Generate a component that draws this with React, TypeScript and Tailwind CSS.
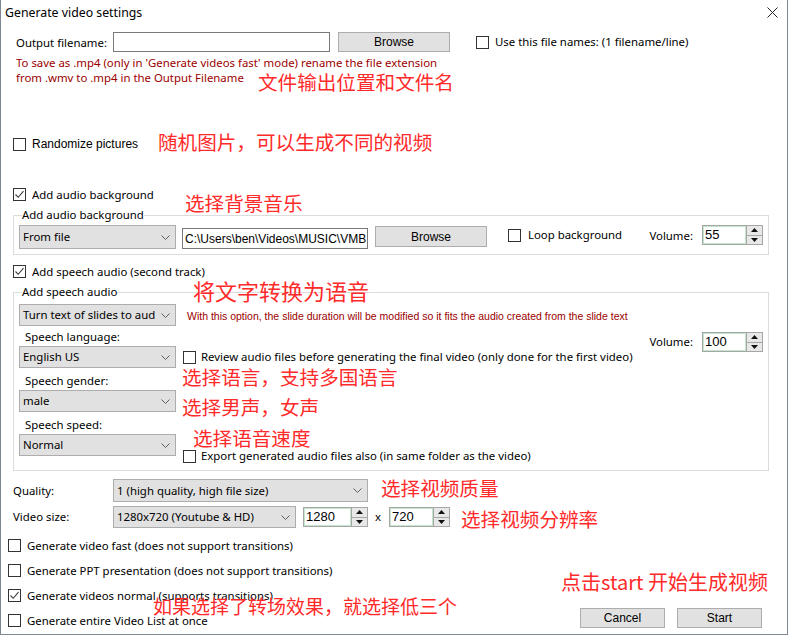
import type { ReactNode } from "react";

const ann = "font-['Noto_Sans_CJK_SC',sans-serif] text-[#ff2a2a] whitespace-nowrap";
const ms = "font-['Liberation_Sans',Arial,sans-serif]";

function Box({ checked = false }: { checked?: boolean }) {
  return (
    <span className="flex h-[13px] w-[13px] shrink-0 items-center justify-center border border-[#333333] bg-white">
      {checked ? (
        <svg width="11" height="11" viewBox="0 0 11 11">
          <path d="M1.5 5.5 L4.2 8.3 L9.5 2.2" fill="none" stroke="#3a3a3a" strokeWidth="1.1" />
        </svg>
      ) : null}
    </span>
  );
}

function Combo({ children, className }: { children: ReactNode; className: string }) {
  return (
    <div className={`flex shrink-0 items-center justify-between border border-[#adadad] bg-[#e1e1e1] pl-[3px] pr-[5px] ${className}`}>
      <span className="whitespace-nowrap">{children}</span>
      <svg width="9" height="5" viewBox="0 0 9 5" className="ml-[4px] shrink-0">
        <path d="M0.5 0.5 L4.5 4.5 L8.5 0.5" fill="none" stroke="#5f5f5f" />
      </svg>
    </div>
  );
}

function Spin({ value, className }: { value: string; className: string }) {
  return (
    <div className={`flex h-[20px] shrink-0 border border-[#a6a6a6] ${className}`}>
      <div className={`flex flex-1 items-center border border-[#c4e6cb] pl-[1px] text-[13px] ${ms}`}>{value}</div>
      <div className="flex w-[16px] flex-col border-l border-[#a6a6a6] bg-[#e8e8e8]">
        <div className="flex flex-1 items-center justify-center border-b border-[#a6a6a6]">
          <svg width="7" height="4" viewBox="0 0 7 4">
            <path d="M3.5 0 L7 4 L0 4 Z" fill="#111" />
          </svg>
        </div>
        <div className="flex flex-1 items-center justify-center">
          <svg width="7" height="4" viewBox="0 0 7 4">
            <path d="M0 0 L7 0 L3.5 4 Z" fill="#111" />
          </svg>
        </div>
      </div>
    </div>
  );
}

function Button({ children, className }: { children: ReactNode; className: string }) {
  return (
    <button className={`flex h-[20px] shrink-0 items-center justify-center border border-[#adadad] bg-[#e1e1e1] text-[12px] ${ms} ${className}`}>
      {children}
    </button>
  );
}

function CheckRow({ checked = false, children }: { checked?: boolean; children: ReactNode }) {
  return (
    <div className="flex h-[13px] items-center">
      <Box checked={checked} />
      <span className="ml-[6px] whitespace-nowrap">{children}</span>
    </div>
  );
}

export default function App() {
  return (
    <div className="h-[636px] w-[788px] bg-white font-['Noto_Sans',sans-serif] text-[11.4px] leading-[14px] text-black">
      <div className="relative flex h-[635px] w-[788px] flex-col border-x border-b border-[#7d8894]">
        {/* title bar */}
        <div className="flex h-[25px] shrink-0 items-center justify-between pl-[4px] pr-[9px]">
          <span className="text-[12.3px]">Generate video settings</span>
          <svg width="11" height="11" viewBox="0 0 11 11">
            <path d="M0.5 0.5 L10.5 10.5 M10.5 0.5 L0.5 10.5" stroke="#222" strokeWidth="1" />
          </svg>
        </div>

        {/* output filename */}
        <div className="mt-[7px] flex h-[20px] items-center pl-[15px]">
          <span className="w-[97px] shrink-0 pt-[1px]">Output filename:</span>
          <div className="h-[20px] w-[217px] shrink-0 border border-[#7a7a7a] bg-white" />
          <Button className="ml-[8px] w-[112px]">Browse</Button>
          <span className="ml-[26px]">
            <Box />
          </span>
          <span className="ml-[6px] whitespace-nowrap">Use this file names: (1 filename/line)</span>
        </div>

        <div className="mt-[3px] flex flex-col pl-[15px] leading-[15px] text-[#9b0000]">
          <span>To save as .mp4 (only in 'Generate videos fast' mode) rename the file extension</span>
          <div className="flex items-start">
            <span className="w-[242px] shrink-0">from .wmv to .mp4 in the Output Filename</span>
            <span className={`${ann} text-[19.6px] leading-[24px]`}>文件输出位置和文件名</span>
          </div>
        </div>

        {/* randomize */}
        <div className="mt-[38px] flex h-[24px] items-center pl-[12px]">
          <Box />
          <span className={`ml-[6px] w-[126px] shrink-0 text-[12px] ${ms}`}>Randomize pictures</span>
          <span className={`${ann} -mt-[4px] text-[19.6px] leading-[24px]`}>随机图片，可以生成不同的视频</span>
        </div>

        {/* audio background */}
        <div className="mt-[32px] pl-[12px]">
          <CheckRow checked>Add audio background</CheckRow>
        </div>

        <fieldset className="mt-[7px] ml-[12px] w-[756px] border border-[#dcdcdc] px-0 pb-[5px]">
          <legend className="ml-[8px] px-0 leading-[14px]">Add audio background</legend>
          <div className="mt-[3px] flex items-start pl-[5px] pr-[5px]">
            <Combo className="h-[24px] w-[157px]">From file</Combo>
            <div className={`mt-[3px] ml-[6px] flex h-[21px] w-[186px] shrink-0 items-center whitespace-nowrap border border-[#7a7a7a] pl-[2px] text-[12px] ${ms}`}>
              C:\Users\ben\Videos\MUSIC\VMB
            </div>
            <Button className="mt-[1px] ml-[7px] h-[21px] w-[112px]">Browse</Button>
            <span className="mt-[4px] ml-[21px]">
              <Box />
            </span>
            <span className="mt-[3px] ml-[7px] whitespace-nowrap">Loop background</span>
            <div className="ml-auto flex items-center">
              <span className="mt-[1px]">Volume:</span>
              <Spin value="55" className="ml-[9px] w-[61px]" />
            </div>
          </div>
        </fieldset>

        {/* speech audio */}
        <div className="mt-[10px] pl-[12px]">
          <CheckRow checked>Add speech audio (second track)</CheckRow>
        </div>

        <fieldset className="mt-[7px] ml-[12px] w-[756px] border border-[#dcdcdc] px-0">
          <legend className="ml-[8px] px-0 leading-[14px]">Add speech audio</legend>
          <div className="flex items-start">
            <div className="flex w-[162px] shrink-0 flex-col pb-[14px] pl-[5px]">
              <Combo className="mt-[5px] h-[22px] w-[157px]">Turn text of slides to aud</Combo>
              <span className="mt-[4px] pl-[6px]">Speech language:</span>
              <Combo className="mt-[2px] h-[22px] w-[157px]">English US</Combo>
              <span className="mt-[6px] pl-[6px]">Speech gender:</span>
              <Combo className="mt-[2px] h-[22px] w-[157px]">male</Combo>
              <span className="mt-[6px] pl-[6px]">Speech speed:</span>
              <Combo className="mt-[2px] h-[22px] w-[157px]">Normal</Combo>
            </div>
            <div className="ml-[6px] flex flex-1 flex-col pr-[5px]">
              <span className="mt-[10px] whitespace-nowrap pl-[5px] font-['Liberation_Sans_Narrow','Liberation_Sans',sans-serif] text-[10.5px] text-[#9b0000]">
                With this option, the slide duration will be modified so it fits the audio created from the slide text
              </span>
              <div className="mt-[9px] flex h-[20px] items-center justify-end">
                <span>Volume:</span>
                <Spin value="100" className="ml-[9px] w-[61px]" />
              </div>
              <div className="-mt-[2px] flex h-[14px] items-center pl-[1px]">
                <Box />
                <span className="ml-[5px] whitespace-nowrap">
                  Review audio files before generating the final video (only done for the first video)
                </span>
              </div>
              <span className={`${ann} mt-[1px] text-[19.6px] leading-[24px]`}>选择语言，支持多国语言</span>
              <span className={`${ann} mt-[6px] text-[19.6px] leading-[24px]`}>选择男声，女声</span>
              <span className={`${ann} mt-[7px] ml-[11px] text-[19.6px] leading-[24px]`}>选择语音速度</span>
              <div className="-mt-[1px] flex h-[14px] items-center pl-[1px]">
                <Box />
                <span className="ml-[5px] whitespace-nowrap">
                  Export generated audio files also (in same folder as the video)
                </span>
              </div>
            </div>
          </div>
        </fieldset>

        {/* quality */}
        <div className="mt-[8px] flex items-center pl-[12px]">
          <span className="w-[100px] shrink-0">Quality:</span>
          <Combo className="h-[23px] w-[255px]">1 (high quality, high file size)</Combo>
          <span className={`${ann} ml-[13px] -mt-[6px] text-[19.6px] leading-[24px]`}>选择视频质量</span>
        </div>

        <div className="mt-[4px] flex h-[22px] items-center pl-[12px]">
          <span className="w-[100px] shrink-0">Video size:</span>
          <Combo className="h-[22px] w-[183px]">1280x720 (Youtube &amp; HD)</Combo>
          <Spin value="1280" className="ml-[7px] w-[65px]" />
          <span className="ml-[7px]">x</span>
          <Spin value="720" className="ml-[8px] w-[61px]" />
          <span className={`${ann} ml-[11px] mt-[4px] text-[19.6px] leading-[24px]`}>选择视频分辨率</span>
        </div>

        {/* generate options + buttons */}
        <div className="mt-[11px] flex items-start">
          <div className="flex flex-col gap-[12px] pl-[7px]">
            <CheckRow>Generate video fast (does not support transitions)</CheckRow>
            <CheckRow>Generate PPT presentation (does not support transitions)</CheckRow>
            <CheckRow checked>Generate videos normal (supports transitions)</CheckRow>
            <CheckRow>Generate entire Video List at once</CheckRow>
          </div>
          <div className="mr-[25px] ml-auto flex flex-col items-end">
            <span className={`${ann} mt-[31px] -mr-[6px] text-[20px] leading-[24px]`}>点击start 开始生成视频</span>
            <div className="mt-[14px] flex">
              <Button className="w-[85px]">Cancel</Button>
              <Button className="ml-[12px] w-[85px]">Start</Button>
            </div>
          </div>
        </div>

        {/* annotations laid over the dialog */}
        <span className={`${ann} absolute top-[191px] left-[184px] text-[19.6px] leading-[24px]`}>选择背景音乐</span>
        <span className={`${ann} absolute top-[276px] left-[192px] text-[22px] leading-[28px]`}>将文字转换为语音</span>
        <span className={`${ann} absolute top-[594px] left-[152px] text-[19px] leading-[24px]`}>如果选择了转场效果，就选择低三个</span>
      </div>
    </div>
  );
}
